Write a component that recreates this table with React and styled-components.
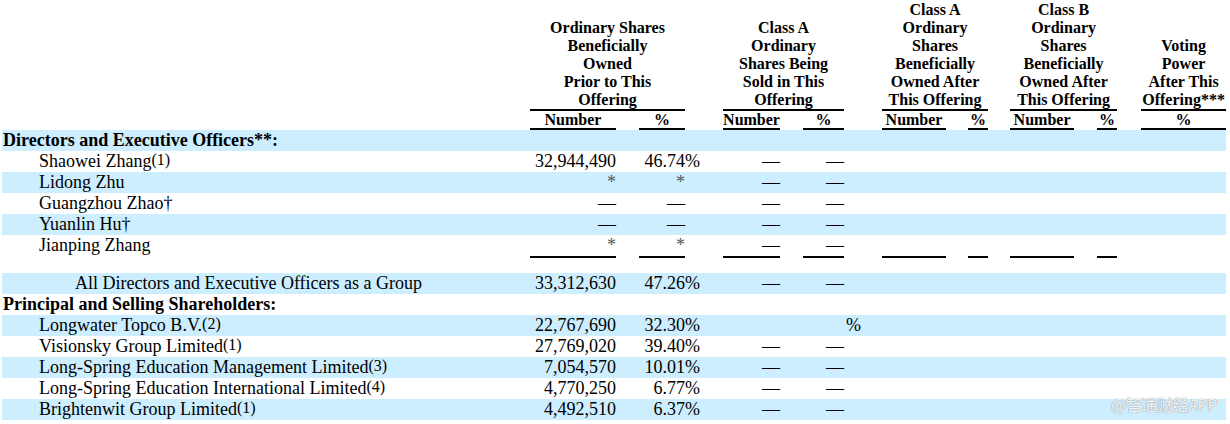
import React from 'react';
import styled, { createGlobalStyle } from 'styled-components';

const GlobalStyle = createGlobalStyle`
  body {
    margin: 0;
    background: #ffffff;
    font-family: "Liberation Serif", "Times New Roman", serif;
    color: #000000;
  }
`;

const Page = styled.div`
  position: relative;
  width: 1230px;
  height: 424px;
  overflow: hidden;
  padding-left: 2px;
  box-sizing: border-box;
`;

const Table = styled.table`
  width: 1224px;
  table-layout: fixed;
  border-collapse: separate;
  border-spacing: 0;
  font-family: "Liberation Serif", "Times New Roman", serif;
`;

const GroupHead = styled.th`
  padding: 1px 0 0;
  font-size: 16px;
  line-height: 18px;
  font-weight: bold;
  text-align: center;
  vertical-align: bottom;
  white-space: nowrap;
  border-bottom: ${({ $rule }) => ($rule ? '2px solid #000' : '2px solid transparent')};
`;

const SubHead = styled.th`
  padding: 0;
  height: 17px;
  font-size: 16px;
  line-height: 17px;
  font-weight: bold;
  text-align: center;
  white-space: nowrap;
  border-bottom: ${({ $rule }) => ($rule ? '2px solid #000' : '2px solid transparent')};
`;

const Row = styled.tr`
  height: 21px;
  background: ${({ $shade }) => ($shade ? '#cceeff' : 'transparent')};
`;

const NameCell = styled.td`
  padding: 0 0 0 ${({ $indent }) => $indent}px;
  height: 21px;
  font-size: 18px;
  line-height: 21px;
  font-weight: ${({ $bold }) => ($bold ? 'bold' : 'normal')};
  white-space: nowrap;
  overflow: visible;
`;

const Num = styled.td`
  padding: 0;
  font-size: 18px;
  line-height: 21px;
  text-align: right;
  white-space: nowrap;
  color: ${({ $star }) => ($star ? '#555' : '#000')};
`;

const Suffix = styled.td`
  padding: 0 0 0 ${({ $pad }) => $pad || 0}px;
  font-size: 18px;
  line-height: 21px;
  text-align: left;
  white-space: nowrap;
`;

const Blank = styled.td`
  padding: 0;
`;

const RuleRow = styled.tr`
  height: 17px;
`;

const RuleCell = styled.td`
  padding: 0;
  height: 15px;
  border-top: ${({ $rule }) => ($rule ? '2px solid #000' : '2px solid transparent')};
  vertical-align: top;
`;

const Note = styled.span`
  font-size: 16px;
  line-height: 0;
  vertical-align: 2px;
`;

const Watermark = styled.div`
  position: absolute;
  left: 1111px;
  top: 395px;
  font-family: "Noto Sans CJK SC", "Noto Sans", sans-serif;
  font-size: 16px;
  line-height: 19px;
  letter-spacing: -0.4px;
  color: rgba(255, 255, 255, 0.9);
  text-shadow: 0 0 1px #9a9a9a, 0 0 1px #9a9a9a;
`;

const widths = [528, 86, 23, 46, 38, 57, 23, 41, 38, 64, 22, 20, 22, 64, 23, 20, 24, 85];

const groups = [
  { span: 1 },
  { span: 3, lines: ['Ordinary Shares', 'Beneficially', 'Owned', 'Prior to This', 'Offering'] },
  { span: 1 },
  { span: 3, lines: ['Class A', 'Ordinary', 'Shares Being', 'Sold in This', 'Offering'] },
  { span: 1 },
  { span: 3, lines: ['Class A', 'Ordinary', 'Shares', 'Beneficially', 'Owned After', 'This Offering'] },
  { span: 1 },
  { span: 3, lines: ['Class B', 'Ordinary', 'Shares', 'Beneficially', 'Owned After', 'This Offering'] },
  { span: 1 },
  { span: 1, lines: ['Voting', 'Power', 'After This', 'Offering***'] },
];

// which of the 18 columns carry a sub-heading label
const subLabels = {
  1: 'Number', 3: '%', 5: 'Number', 7: '%', 9: 'Number', 11: '%', 13: 'Number', 15: '%', 17: '%',
};

const rows = [
  { heading: 'Directors and Executive Officers**:', shade: true },
  { name: 'Shaowei Zhang', note: '(1)', num: '32,944,490', pct: '46.74', sign: '%', sold: ['—', '—'] },
  { name: 'Lidong Zhu', num: '*', pct: '*', sold: ['—', '—'], shade: true },
  { name: 'Guangzhou Zhao†', num: '—', pct: '—', sold: ['—', '—'] },
  { name: 'Yuanlin Hu†', num: '—', pct: '—', sold: ['—', '—'], shade: true },
  { name: 'Jianping Zhang', num: '*', pct: '*', sold: ['—', '—'] },
  { rule: true },
  { name: 'All Directors and Executive Officers as a Group', indent: 73, num: '33,312,630', pct: '47.26', sign: '%', sold: ['—', '—'], shade: true },
  { heading: 'Principal and Selling Shareholders:' },
  { name: 'Longwater Topco B.V.', note: '(2)', num: '22,767,690', pct: '32.30', sign: '%', sold: ['', ''], soldSign: '%', shade: true },
  { name: 'Visionsky Group Limited', note: '(1)', num: '27,769,020', pct: '39.40', sign: '%', sold: ['—', '—'] },
  { name: 'Long-Spring Education Management Limited', note: '(3)', num: '7,054,570', pct: '10.01', sign: '%', sold: ['—', '—'], shade: true },
  { name: 'Long-Spring Education International Limited', note: '(4)', num: '4,770,250', pct: '6.77', sign: '%', sold: ['—', '—'] },
  { name: 'Brightenwit Group Limited', note: '(1)', num: '4,492,510', pct: '6.37', sign: '%', sold: ['—', '—'], shade: true },
];

// columns that get a rule under the Jianping Zhang row
const ruled = [1, 3, 5, 7, 9, 11, 13, 15];

const EmptyTail = () =>
  Array.from({ length: 9 }).map((_, i) => <Blank key={`t${i}`} />);

const DataRow = ({ r }) => {
  if (r.heading) {
    return (
      <Row $shade={r.shade}>
        <NameCell $indent={1} $bold>{r.heading}</NameCell>
        {Array.from({ length: 17 }).map((_, i) => <Blank key={i} />)}
      </Row>
    );
  }
  return (
    <Row $shade={r.shade}>
      <NameCell $indent={r.indent || 37}>
        {r.name}
        {r.note && <Note>{r.note}</Note>}
      </NameCell>
      <Num $star={r.num === '*'}>{r.num}</Num>
      <Blank />
      <Num $star={r.pct === '*'}>{r.pct}</Num>
      <Suffix>{r.sign}</Suffix>
      <Num>{r.sold[0]}</Num>
      <Blank />
      <Num>{r.sold[1]}</Num>
      <Suffix $pad={2}>{r.soldSign}</Suffix>
      <EmptyTail />
    </Row>
  );
};

export default function App() {
  return (
    <Page>
      <GlobalStyle />
      <Table>
        <colgroup>
          {widths.map((w, i) => <col key={i} style={{ width: w }} />)}
        </colgroup>
        <thead>
          <tr>
            {groups.map((g, i) => (
              <GroupHead key={i} colSpan={g.span} $rule={!!g.lines}>
                {g.lines && g.lines.map((l, j) => <div key={j}>{l}</div>)}
              </GroupHead>
            ))}
          </tr>
          <tr>
            {widths.map((_, i) => (
              <SubHead key={i} $rule={!!subLabels[i]}>{subLabels[i]}</SubHead>
            ))}
          </tr>
        </thead>
        <tbody>
          {rows.map((r, i) =>
            r.rule ? (
              <RuleRow key={i}>
                {widths.map((_, c) => <RuleCell key={c} $rule={ruled.includes(c)} />)}
              </RuleRow>
            ) : (
              <DataRow key={i} r={r} />
            )
          )}
        </tbody>
      </Table>
      <Watermark>@智通财经APP</Watermark>
    </Page>
  );
}
